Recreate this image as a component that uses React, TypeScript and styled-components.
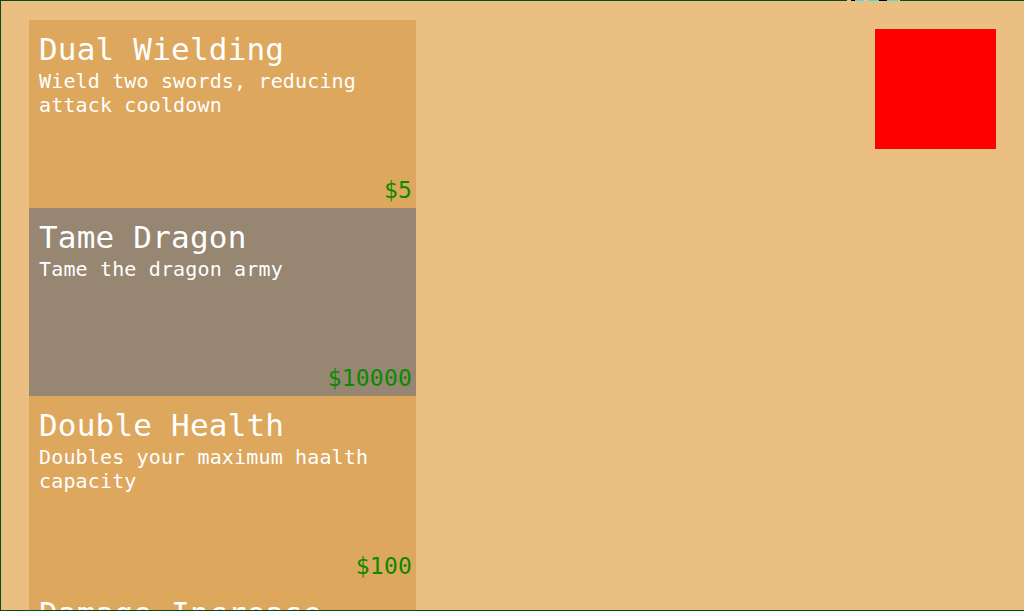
import React from "react";
import styled, { createGlobalStyle } from "styled-components";

const Global = createGlobalStyle`
  html, body { margin: 0; padding: 0; overflow: hidden; }
  body { font-family: "DejaVu Sans Mono", "Liberation Mono", monospace; }
`;

const Root = styled.div`
  position: relative;
  width: 1024px;
  height: 611px;
`;

const Page = styled.div`
  box-sizing: border-box;
  width: 1024px;
  height: 611px;
  overflow: hidden;
  background: #ebbe82;
  border: 1px solid #0b4a1d;
  border-right: none;
  display: flex;
  justify-content: space-between;
  align-items: flex-start;
  padding: 19px 28px 0 28px;
`;

const ShopList = styled.div`
  width: 387px;
  display: flex;
  flex-direction: column;
`;

const Card = styled.div<{ $disabled?: boolean }>`
  box-sizing: border-box;
  height: 188px;
  flex: none;
  display: flex;
  flex-direction: column;
  padding: 11px 4px 5px 10px;
  background: ${(p) => (p.$disabled ? "#968672" : "#dda75d")};
  color: #ffffff;
`;

const Title = styled.div`
  font-size: 31px;
  line-height: 36px;
  letter-spacing: 0.2px;
`;

const Desc = styled.div`
  font-size: 20px;
  line-height: 24px;
  letter-spacing: 0.15px;
  margin-top: 2px;
`;

const Price = styled.div`
  margin-top: auto;
  align-self: flex-end;
  font-size: 23px;
  line-height: 26px;
  letter-spacing: 0.2px;
  color: #0a8a00;
`;

const Target = styled.div`
  width: 121px;
  height: 120px;
  margin-top: 9px;
  background: #ff0000;
`;

const TopStrip = styled.svg`
  position: absolute;
  top: 0;
  left: 847px;
  display: block;
`;

const items = [
  { title: "Dual Wielding", desc: "Wield two swords, reducing attack cooldown", price: "$5" },
  { title: "Tame Dragon", desc: "Tame the dragon army", price: "$10000", disabled: true },
  { title: "Double Health", desc: "Doubles your maximum haalth capacity", price: "$100" },
  { title: "Damage Increase", desc: "Increases the damage of your attacks", price: "$50" },
];

export default function App() {
  return (
    <>
      <Global />
      <Root>
        <Page>
          <ShopList>
            {items.map((it) => (
              <Card key={it.title} $disabled={it.disabled}>
                <Title>{it.title}</Title>
                <Desc>{it.desc}</Desc>
                <Price>{it.price}</Price>
              </Card>
            ))}
          </ShopList>
          <Target />
        </Page>
        <TopStrip width="53" height="1" viewBox="0 0 53 1">
          <rect x="0" y="0" width="4" height="1" fill="#e8c4a8" />
          <rect x="4" y="0" width="4" height="1" fill="#000000" />
          <rect x="8" y="0" width="9" height="1" fill="#3ee0e0" />
          <rect x="17" y="0" width="4" height="1" fill="#e8c4a8" />
          <rect x="21" y="0" width="11" height="1" fill="#3ee0e0" />
          <rect x="32" y="0" width="8" height="1" fill="#000000" />
          <rect x="40" y="0" width="11" height="1" fill="#3ee0e0" />
          <rect x="51" y="0" width="2" height="1" fill="#e8c4a8" />
        </TopStrip>
      </Root>
    </>
  );
}
